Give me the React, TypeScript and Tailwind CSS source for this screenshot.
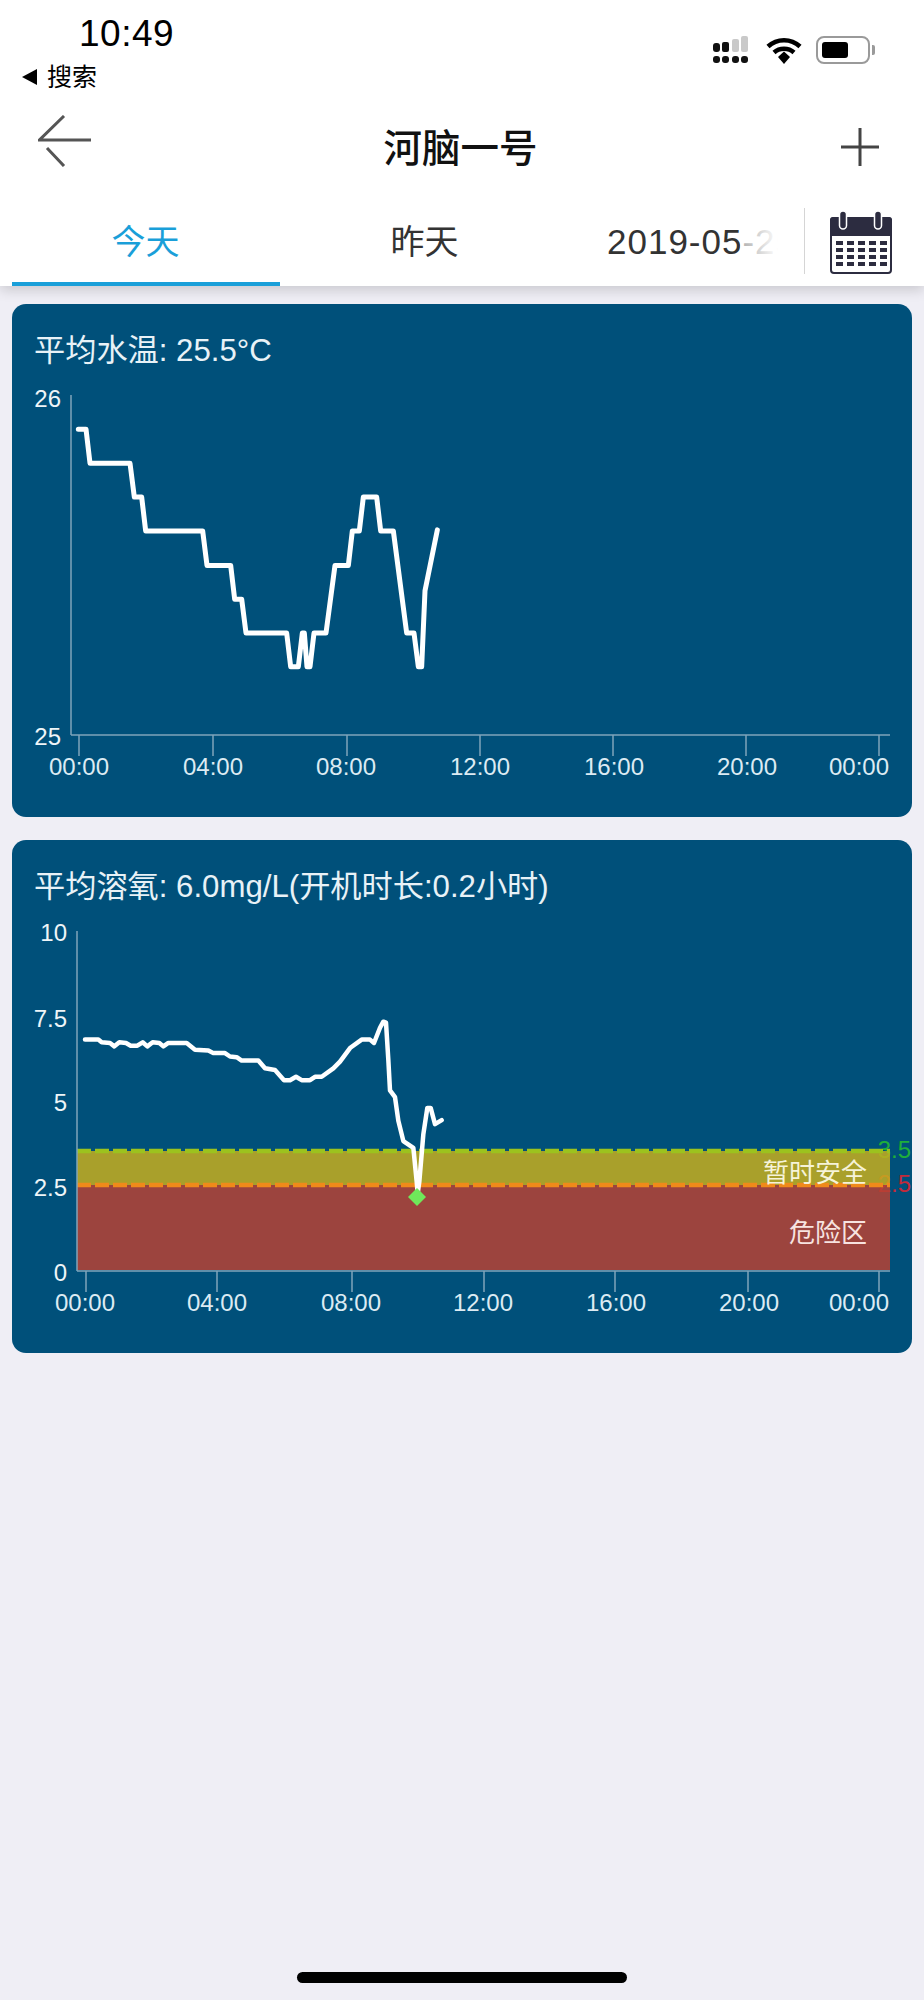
const tempRaw = [
  [235, 382], [258, 382], [270, 483], [390, 483], [403, 583], [425, 583], [437, 683], [608, 683],
  [621, 785], [692, 785], [704, 885], [725, 885], [738, 985], [860, 985], [872, 1085], [895, 1085],
  [907, 985], [913, 985], [921, 1085], [930, 1085], [942, 985], [978, 985], [1005, 785], [1045, 785],
  [1057, 683], [1078, 683], [1090, 583], [1130, 583], [1142, 683], [1180, 683], [1220, 985], [1242, 985],
  [1255, 1085], [1265, 1085], [1275, 860], [1312, 680],
];

const oxyRaw = [
  [255, 620], [295, 620], [305, 628], [330, 630], [343, 640], [358, 628], [378, 630], [392, 638],
  [412, 638], [428, 628], [442, 640], [458, 628], [478, 630], [490, 640], [505, 630], [560, 630],
  [585, 650], [625, 652], [640, 660], [675, 660], [690, 670], [710, 672], [725, 682], [775, 682],
  [795, 705], [825, 710], [852, 740], [870, 740], [888, 730], [905, 740], [930, 740], [945, 730],
  [965, 730], [1000, 705], [1020, 685], [1050, 645], [1085, 620], [1110, 620], [1122, 630], [1140, 585],
  [1150, 567], [1158, 570], [1165, 680], [1170, 770], [1185, 790], [1195, 860], [1210, 920], [1240, 940],
  [1250, 1040], [1253, 1075], [1258, 1040], [1270, 900], [1282, 822], [1292, 822], [1305, 870], [1325, 858],
];

const toPoints = (raw: number[][], top: number) =>
  raw.map(([x, y]) => `${x / 3},${top + y / 2.958}`).join(" ");

const AXIS = "#7fa5bb";
const LABEL = "#dcebf3";

const XLabels = ({ ticks, labels, axisY }: { ticks: number[]; labels: number[]; axisY: number }) => {
  const names = ["00:00", "04:00", "08:00", "12:00", "16:00", "20:00", "00:00"];
  return (
    <g>
      {ticks.map((x, i) => (
        <line key={i} x1={x} x2={x} y1={axisY} y2={axisY + 21} stroke={AXIS} strokeWidth="1.5" />
      ))}
      {labels.map((x, i) => (
        <text key={i} x={x} y={axisY + 40} textAnchor="middle" fontSize="24" fill={LABEL}>
          {names[i]}
        </text>
      ))}
    </g>
  );
};

const TempChart = () => (
  <svg viewBox="12 370 900 447" className="block w-[900px] h-[447px]">
    <line x1="71" x2="71" y1="395" y2="735" stroke={AXIS} strokeWidth="1.5" />
    <line x1="71" x2="890" y1="735" y2="735" stroke={AXIS} strokeWidth="1.5" />
    <text x="61" y="407" textAnchor="end" fontSize="24" fill="#eef5f8">26</text>
    <text x="61" y="745" textAnchor="end" fontSize="24" fill="#eef5f8">25</text>
    <XLabels
      axisY={735}
      ticks={[79, 213, 347, 480, 613, 746, 879]}
      labels={[79, 213, 346, 480, 614, 747, 859]}
    />
    <polyline
      points={toPoints(tempRaw, 300)}
      fill="none"
      stroke="#ffffff"
      strokeWidth="5"
      strokeLinejoin="round"
      strokeLinecap="round"
    />
  </svg>
);

const OxygenChart = () => (
  <svg viewBox="12 906 900 447" className="block w-[900px] h-[447px]">
    <text x="911" y="1158" textAnchor="end" fontSize="24" fill="#1fae3a">3.5</text>
    <text x="911" y="1192" textAnchor="end" fontSize="24" fill="#c22a3a">2.5</text>
    <rect x="77" y="1151" width="813" height="34" fill="#c7ae1d" fillOpacity="0.85" />
    <rect x="77" y="1185" width="813" height="85" fill="#b74234" fillOpacity="0.85" />
    <line x1="77" x2="890" y1="1151" y2="1151" stroke="#9cc21e" strokeWidth="4.5" strokeDasharray="14 4" />
    <line x1="77" x2="890" y1="1185" y2="1185" stroke="#f08a1a" strokeWidth="4.5" strokeDasharray="14 4" />
    <line x1="77" x2="77" y1="931" y2="1271" stroke={AXIS} strokeWidth="1.5" />
    <line x1="77" x2="890" y1="1271" y2="1271" stroke={AXIS} strokeWidth="1.5" />
    <text x="67" y="941" textAnchor="end" fontSize="24" fill="#eef5f8">10</text>
    <text x="67" y="1027" textAnchor="end" fontSize="24" fill="#eef5f8">7.5</text>
    <text x="67" y="1111" textAnchor="end" fontSize="24" fill="#eef5f8">5</text>
    <text x="67" y="1196" textAnchor="end" fontSize="24" fill="#eef5f8">2.5</text>
    <text x="67" y="1281" textAnchor="end" fontSize="24" fill="#eef5f8">0</text>
    <text x="867" y="1182" textAnchor="end" fontSize="26" fill="#f6f3d8">暂时安全</text>
    <text x="867" y="1242" textAnchor="end" fontSize="26" fill="#f7e3e0">危险区</text>
    <XLabels
      axisY={1271}
      ticks={[86, 217, 352, 484, 615, 748, 879]}
      labels={[85, 217, 351, 483, 616, 749, 859]}
    />
    <polyline
      points={toPoints(oxyRaw, 830)}
      fill="none"
      stroke="#ffffff"
      strokeWidth="4.5"
      strokeLinejoin="round"
      strokeLinecap="round"
    />
    <polygon points="417,1188 426,1197 417,1206 408,1197" fill="#6fe85a" />
  </svg>
);

const ChartCard = ({ title, children }: { title: string; children: React.ReactNode }) => (
  <div className="w-[900px] mx-[12px] bg-[#00507a] rounded-[14px] overflow-hidden">
    <div className="h-[66px] pt-[28px] pl-[22px] text-[31.2px] leading-[38px] text-[#e8f2f7] whitespace-nowrap">
      {title}
    </div>
    {children}
  </div>
);

const StatusIcons = () => (
  <div className="flex items-center">
    <svg width="40" height="28" viewBox="0 0 40 28" className="mr-[13px]">
      <rect x="28" y="0" width="7" height="16" rx="2" fill="#c9c9c9" />
      <rect x="19" y="3" width="7" height="13" rx="2" fill="#c9c9c9" />
      <rect x="9" y="6" width="7" height="10" rx="2" fill="#111" />
      <rect x="0" y="7" width="7" height="9" rx="3" fill="#111" />
      {[0, 9, 19, 28].map((x) => (
        <rect key={x} x={x} y="20" width="7" height="7" rx="3" fill="#111" />
      ))}
    </svg>
    <svg width="36" height="27" viewBox="0 0 36 27" className="mr-[14px]">
      <path d="M2 9.5C11 1 25 1 34 9.5" fill="none" stroke="#000" strokeWidth="4.5" />
      <path d="M8 15.5C13.5 10.5 22.5 10.5 28 15.5" fill="none" stroke="#000" strokeWidth="4.5" />
      <path d="M12 20L18 14.5L24 20L18 27Z" fill="#000" />
    </svg>
    <div className="relative w-[54px] h-[28px] border-[2px] border-[#9a9a9a] rounded-[8px]">
      <div className="absolute left-[4px] top-[4px] w-[26px] h-[16px] bg-black rounded-[3px]" />
      <div className="absolute -right-[7px] top-[7px] w-[3px] h-[10px] bg-[#9a9a9a] rounded-r-[2px]" />
    </div>
  </div>
);

const CalendarIcon = () => (
  <svg width="62" height="64" viewBox="0 0 62 64">
    <rect x="1" y="8" width="60" height="55" rx="3" fill="#fff" stroke="#2c2c40" strokeWidth="2" />
    <path d="M0 26V10a3 3 0 0 1 3-3h56a3 3 0 0 1 3 3v16Z" fill="#2c2c40" />
    {[13, 48].map((x) => (
      <rect key={x} x={x - 3.5} y="1" width="7" height="18" rx="3.5" fill="#2c2c40" stroke="#fff" strokeWidth="1.5" />
    ))}
    {[6, 17, 28, 39, 50].flatMap((x) =>
      [31, 38, 45, 52].map((y) => <rect key={`${x}-${y}`} x={x} y={y} width="7" height="4" fill="#2c2c40" />)
    )}
  </svg>
);

export default function App() {
  return (
    <div className="w-[924px] h-[2000px] relative bg-[#efeef5] font-['Liberation_Sans','Noto_Sans_CJK_SC',sans-serif] overflow-hidden">
      <div className="relative z-10 bg-white h-[286px] shadow-[0_4px_12px_rgba(0,0,0,0.16)]">
        {/* status bar */}
        <div className="h-[100px] flex justify-between pr-[54px]">
          <div className="pl-[22px] pt-[15px]">
            <div className="pl-[57px] text-[37px] leading-[38px] font-medium text-black tracking-[0.5px]">10:49</div>
            <div className="flex items-center mt-[9px]">
              <span className="w-0 h-0 border-y-[8px] border-y-transparent border-r-[15px] border-r-black mr-[10px]" />
              <span className="text-[25px] leading-[30px] text-black">搜索</span>
            </div>
          </div>
          <div className="pt-[36px]">
            <StatusIcons />
          </div>
        </div>

        {/* nav */}
        <div className="h-[94px] flex items-center justify-between pl-[38px] pr-[45px]">
          <svg width="54" height="52" viewBox="0 0 54 52" className="-mt-[12px]">
            <path d="M26 1L1.5 25H53M9 33L26 51" fill="none" stroke="#555" strokeWidth="3" />
          </svg>
          <div className="text-[38.5px] leading-[44px] font-medium text-[#111] pr-[12px] pt-[4px]">河脑一号</div>
          <svg width="38" height="38" viewBox="0 0 38 38">
            <path d="M19 0V38M0 19H38" fill="none" stroke="#444" strokeWidth="3" />
          </svg>
        </div>

        {/* tabs */}
        <div className="h-[92px] flex items-start pl-[6px]">
          <div className="relative flex w-[798px] h-[92px] overflow-hidden text-[34px] leading-[96px] text-[#333]">
            <div className="relative flex-none w-[279px] text-center text-[#1a9fd9]">
              今天
              <div className="absolute left-[6px] right-[5px] bottom-0 h-[4px] bg-[#1a9fd9]" />
            </div>
            <div className="flex-none w-[279px] text-center">昨天</div>
            <div className="flex-none pl-[43px] whitespace-nowrap text-[35px] tracking-[1px]">2019-05-25</div>
            <div className="absolute right-0 top-0 bottom-0 w-[64px] bg-gradient-to-r from-white/60 to-white to-60%" />
          </div>
          <div className="w-[1px] h-[66px] mt-[14px] bg-[#d5d5d5]" />
          <div className="ml-[25px] mt-[16px]">
            <CalendarIcon />
          </div>
        </div>
      </div>

      <div className="pt-[18px] flex flex-col gap-[23px]">
        <ChartCard title="平均水温: 25.5°C">
          <TempChart />
        </ChartCard>
        <ChartCard title="平均溶氧: 6.0mg/L(开机时长:0.2小时)">
          <OxygenChart />
        </ChartCard>
      </div>

      {/* home indicator */}
      <div className="absolute left-[297px] bottom-[17px] w-[330px] h-[11px] rounded-full bg-black" />
    </div>
  );
}
